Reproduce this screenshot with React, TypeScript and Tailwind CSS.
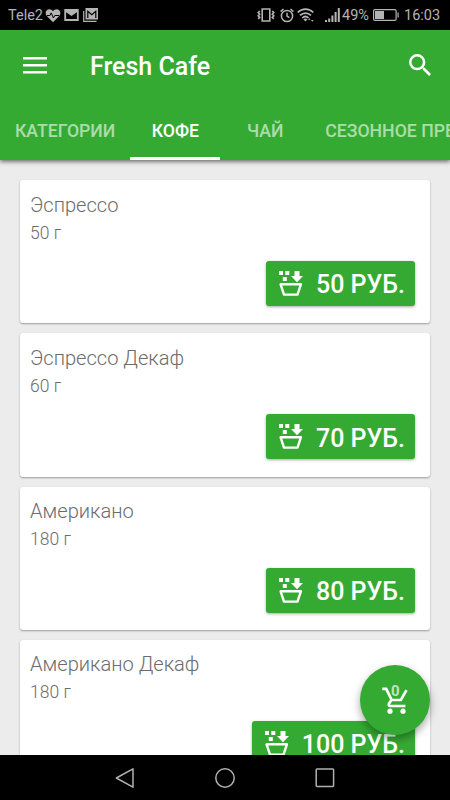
type Product = {
  name: string;
  weight: string;
  price: string;
};

const tabs = [
  { label: "КАТЕГОРИИ" },
  { label: "КОФЕ", active: true },
  { label: "ЧАЙ" },
  { label: "СЕЗОННОЕ ПРЕДЛОЖЕНИЕ" },
];

const products: Product[] = [
  { name: "Эспрессо", weight: "50 г", price: "50 РУБ." },
  { name: "Эспрессо Декаф", weight: "60 г", price: "70 РУБ." },
  { name: "Американо", weight: "180 г", price: "80 РУБ." },
  { name: "Американо Декаф", weight: "180 г", price: "100 РУБ." },
];

function StatusBar() {
  return (
    <div className="flex h-[30px] shrink-0 items-center bg-black pr-[10px] pl-2 text-[#b4b4b4]">
      <span className="w-[37px] pt-[2px] text-[14.5px] whitespace-nowrap">Tele2</span>
      <svg className="h-[15px] w-4" viewBox="0 0 16 15">
        <path fill="currentColor" d="M8 14.2 1.8 8C-.6 5.2.9 1.2 4.3 1.2 6 1.2 7.2 2 8 3.2c.8-1.2 2-2 3.7-2 3.4 0 4.9 4 2.5 6.8z" />
        <path fill="none" stroke="#000" strokeWidth="1" d="M2 7.5h3l1.2-2.6L8.4 10l1.4-2.5H14" />
      </svg>
      <svg className="ml-[3px] h-3 w-[15px]" viewBox="0 0 15 12">
        <path fill="none" stroke="currentColor" strokeWidth="1.8" d="M1.2 1h12.6v10H1.2z" />
        <path fill="currentColor" d="M1 1h13v1.5L7.5 7 1 2.5z" />
      </svg>
      <svg className="ml-1 h-[14px] w-4" viewBox="0 0 16 14">
        <path fill="none" stroke="currentColor" strokeWidth="1.2" d="M.7 3v10.4h12.8" />
        <path fill="currentColor" d="M2.5 0H15v11.5H2.5z" />
        <path fill="none" stroke="#000" strokeWidth="1.2" d="M4.8 10V3.2l4 3.4 4-3.4V10" />
      </svg>
      <div className="ml-auto flex items-center">
        <svg className="h-[14px] w-[18px]" viewBox="0 0 18 14" fill="none" stroke="currentColor">
          <path strokeWidth="1.6" d="M5.2 1h7.6v12H5.2z" />
          <path strokeWidth="1.6" d="m2.7 3-1.5 1.6 1.5 1.6-1.5 1.6 1.5 1.6-1.5 1.4M15.3 3l1.5 1.6-1.5 1.6 1.5 1.6-1.5 1.6 1.5 1.4" />
        </svg>
        <svg className="ml-[5px] h-[15px] w-[14px]" viewBox="0 0 14 15" fill="none" stroke="currentColor" strokeWidth="1.5">
          <circle cx="7" cy="8" r="5.6" />
          <path d="M7 4.7V8l2.4 1.6M.6 3.6 3.5 1M13.4 3.6 10.5 1" />
        </svg>
        <svg className="ml-[3px] h-[14px] w-[17px]" viewBox="0 0 17 14" fill="none" stroke="currentColor" strokeWidth="1.7">
          <path d="M.7 4.5c4.4-4.4 11.2-4.4 15.6 0M3 7.4c3.2-3.1 7.8-3.1 11 0M5.3 10c1.9-1.8 4.4-1.8 6.2 0" />
          <path fill="currentColor" stroke="none" d="m8.4 13.5-2-2.2q2-1.4 4 0zM11 11.7l1.3-1.7 1.3 1.7zM14 12l1.3 1.7L16.6 12z" />
        </svg>
        <svg className="ml-[11px] h-[14px] w-[15px]" viewBox="0 0 15 14" fill="currentColor">
          <path d="M0 12h2v2H0zM3.2 10.5h2V14h-2zM6.4 7.5h2V14h-2zM9.6 4h2v10h-2zM12.8 0h2v14h-2z" />
        </svg>
        <span className="ml-0.5 w-[31px] pt-px text-[14.5px] whitespace-nowrap">49%</span>
        <svg className="h-3 w-[26px]" viewBox="0 0 26 12">
          <rect x=".6" y=".6" width="22.5" height="10.8" rx="1.2" fill="none" stroke="currentColor" strokeWidth="1.2" />
          <path fill="currentColor" d="M2 2h9v8H2zM24.5 3.5h1.2v5h-1.2z" />
        </svg>
        <span className="ml-[5px] w-[36px] pt-[2px] text-[14.5px] whitespace-nowrap">16:03</span>
      </div>
    </div>
  );
}

function Header() {
  return (
    <header className="z-10 h-[130px] shrink-0 bg-[#35aa32] text-white shadow-[0_2px_4px_rgba(0,0,0,0.5)]">
      <div className="flex h-[70px] items-center pr-[19px] pl-[23px]">
        <svg className="h-[17px] w-6" viewBox="0 0 24 17" fill="currentColor">
          <path d="M0 0h24v2.6H0zM0 7h24v2.6H0zM0 14h24v2.6H0z" />
        </svg>
        <h1 className="ml-[43px] pt-[3px] text-[25px] font-medium">Fresh Cafe</h1>
        <svg className="ml-auto h-[22px] w-[22px]" viewBox="3 3 17.5 17.5" fill="currentColor">
          <path d="M15.5 14h-.79l-.28-.27A6.47 6.47 0 0 0 16 9.5 6.5 6.5 0 1 0 9.5 16c1.61 0 3.09-.59 4.23-1.57l.27.28v.79l5 4.99L20.49 19zm-6 0a4.5 4.5 0 1 1 0-9 4.5 4.5 0 0 1 0 9z" />
        </svg>
      </div>
      <nav className="flex h-[60px] overflow-hidden">
        {tabs.map((tab) => (
          <div
            key={tab.label}
            className={`flex min-w-[90px] shrink-0 items-center justify-center border-b-[3px] px-[15px] pt-[5px] text-[17.65px] font-medium whitespace-nowrap ${
              tab.active ? "border-white" : "border-transparent text-white/60"
            }`}
          >
            {tab.label}
          </div>
        ))}
      </nav>
    </header>
  );
}

function BasketIcon() {
  return (
    <svg className="h-[25px] w-6 shrink-0" viewBox="0 0 24 25" fill="currentColor">
      <path d="M0 0h4v4H0zM6.3 0h4v4h-4zM3.8 6h4v4h-4zM15.5 0h5v5H24l-6 6.3L12 5h3.5z" />
      <path fill="none" stroke="currentColor" strokeWidth="2.4" strokeLinejoin="round" d="M1.6 13.3h20.3l-3.4 10.3H5z" />
    </svg>
  );
}

function ProductCard({ product }: { product: Product }) {
  return (
    <section className="flex h-[143.3px] shrink-0 flex-col rounded-[3px] bg-white px-[10px] shadow-[0_1px_2px_rgba(0,0,0,0.35)]">
      <h2 className="mt-[9.5px] text-[20.1px] leading-[30px] font-light text-[#6c6c6c]">{product.name}</h2>
      <p className="text-[17.5px] leading-[26px] font-light text-[#6c6c6c]">{product.weight}</p>
      <button className="mt-[15.5px] mr-[5px] flex h-[45px] shrink-0 items-center self-end rounded-[3px] bg-[#35aa32] pr-[10px] pl-[13px] text-[25px] font-medium whitespace-nowrap text-white shadow-[0_1px_3px_rgba(0,0,0,0.35)]">
        <BasketIcon />
        <span className="ml-[13px] pt-[3px]">{product.price}</span>
      </button>
    </section>
  );
}

function CartButton() {
  return (
    <button className="absolute right-5 bottom-5 flex size-[70px] items-center justify-center rounded-full bg-[#35aa32] text-white shadow-[0_4px_8px_rgba(0,0,0,0.35)]">
      <svg className="h-[27px] w-[26px]" viewBox="0 0 26 27" fill="none" stroke="currentColor" strokeWidth="2.7">
        <path d="M.3 1.8h3.9L9.7 13h9.2l5.6-9.8M9.4 13l-2.5 3.8q-.6 2.2 1.5 2.2h15" />
        <circle cx="8" cy="24.2" r="2.6" fill="currentColor" stroke="none" />
        <circle cx="21" cy="24.2" r="2.6" fill="currentColor" stroke="none" />
      </svg>
      <span className="absolute top-[18px] left-[31px] text-[15px] leading-[17px] font-bold text-white/70">0</span>
    </button>
  );
}

function NavigationBar() {
  return (
    <div className="flex h-[45px] shrink-0 items-center justify-center gap-20 bg-black text-[#b0b0b0]">
      <svg className="size-5" viewBox="0 0 20 20" fill="none" stroke="currentColor" strokeWidth="1.5" strokeLinejoin="round">
        <path d="M18 .8v18.4L1.3 10z" />
      </svg>
      <svg className="size-5" viewBox="0 0 20 20" fill="none" stroke="currentColor" strokeWidth="1.5">
        <circle cx="10" cy="10" r="9.2" />
      </svg>
      <svg className="size-5" viewBox="0 0 20 20" fill="none" stroke="currentColor" strokeWidth="1.5">
        <rect x="1.2" y="1" width="17.4" height="17.4" rx=".8" />
      </svg>
    </div>
  );
}

export default function App() {
  return (
    <div className="flex h-[800px] w-[450px] flex-col overflow-hidden bg-[#ececec] font-['Roboto',sans-serif]">
      <StatusBar />
      <Header />
      <main className="relative min-h-0 flex-1">
        <div className="flex h-full flex-col gap-[10px] overflow-hidden px-5 pt-5">
          {products.map((product) => (
            <ProductCard key={product.name} product={product} />
          ))}
        </div>
        <CartButton />
      </main>
      <NavigationBar />
    </div>
  );
}
